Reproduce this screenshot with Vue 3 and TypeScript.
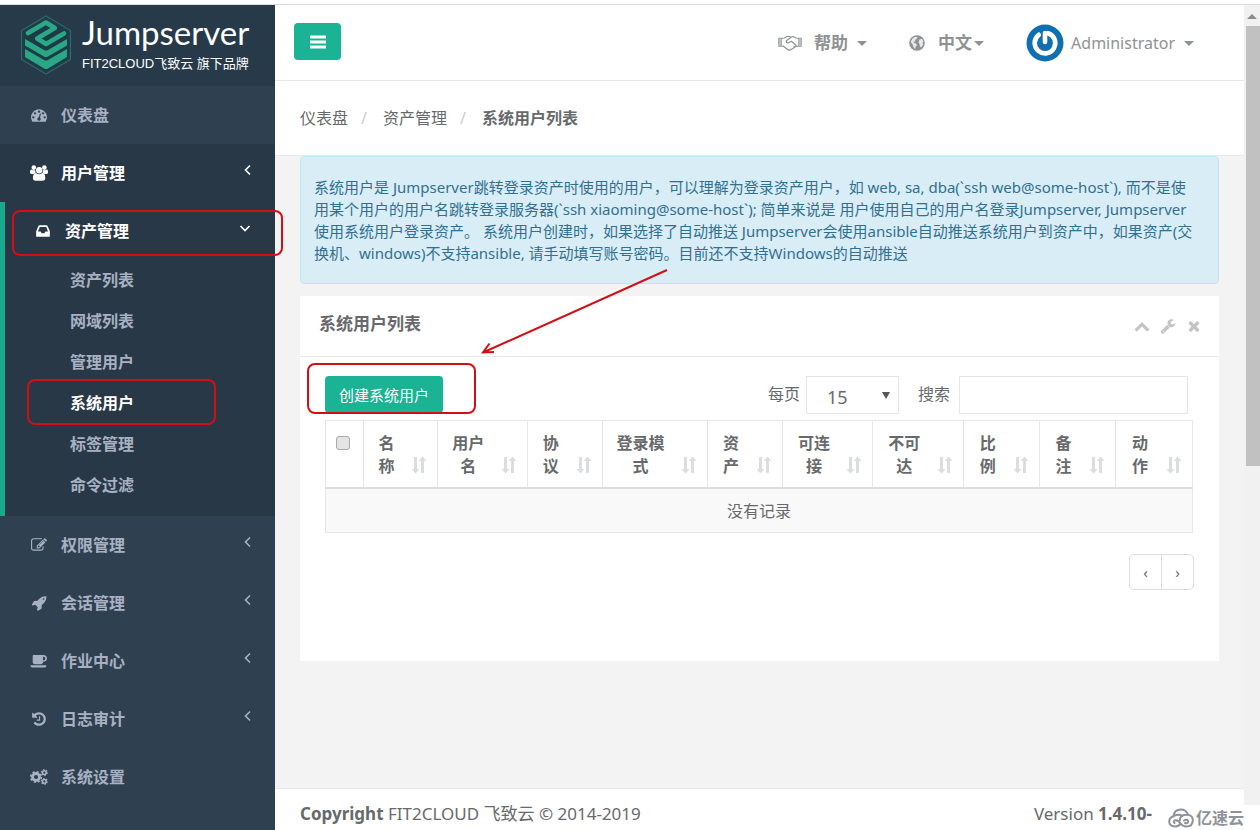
<script setup lang="ts">
import { ref } from 'vue'

interface Shape { box: string; d: string }
interface NavItem { label: string; icon: string; arrow?: boolean; lit?: boolean; children?: string[] }
interface Column { label: string; width: number }

const icons: Record<string, Shape> = {
  dashboard: { box: '0 0 1792 1792', d: 'M384 1152q0-53-37.5-90.5t-90.5-37.5-90.5 37.5-37.5 90.5 37.5 90.5 90.5 37.5 90.5-37.5 37.5-90.5zm192-448q0-53-37.5-90.5t-90.5-37.5-90.5 37.5-37.5 90.5 37.5 90.5 90.5 37.5 90.5-37.5 37.5-90.5zm428 481l101-382q6-26-7.5-48.5t-38.5-29.5-48 6.5-30 39.5l-101 382q-60 5-107 43.5t-63 98.5q-20 77 20 146t117 89 146-20 89-117q16-60-6-117t-72-91zm660-33q0-53-37.5-90.5t-90.5-37.5-90.5 37.5-37.5 90.5 37.5 90.5 90.5 37.5 90.5-37.5 37.5-90.5zm-640-640q0-53-37.5-90.5t-90.5-37.5-90.5 37.5-37.5 90.5 37.5 90.5 90.5 37.5 90.5-37.5 37.5-90.5zm448 192q0-53-37.5-90.5t-90.5-37.5-90.5 37.5-37.5 90.5 37.5 90.5 90.5 37.5 90.5-37.5 37.5-90.5zm320 448q0 261-141 483-19 29-54 29h-1402q-35 0-54-29-141-221-141-483 0-182 71-348t191-286 286-191 348-71 348 71 286 191 191 286 71 348z' },
  users: { box: '0 0 18 16', d: 'M6 5.200a3.200 3.200 0 1 1 6.400 0a3.200 3.200 0 1 1-6.400 0zM1.500 2.600a2.300 2.300 0 1 1 4.600 0a2.300 2.300 0 1 1-4.600 0zM12.100 2.600a2.300 2.300 0 1 1 4.600 0a2.300 2.300 0 1 1-4.600 0zM5.900 8C3.700 8.100 2.900 10.400 2.900 13C2.900 14.800 3.900 15.800 5.500 15.800H12.700C14.300 15.800 15.300 14.800 15.300 13C15.300 10.400 14.500 8.100 12.300 8C11.300 8.900 10.200 9.300 9.100 9.300C8 9.300 6.900 8.900 5.900 8zM1.400 4.600C.4 4.700 0 5.900 0 7.300C0 8.400 .6 8.900 1.500 8.900H4C4.600 8.100 5.200 7.700 5.800 7.500C5.300 6.900 5.200 6 5.200 5.100C3.900 5.600 2.400 5.400 1.400 4.600zM16.800 4.600C17.800 4.700 18 5.900 18 7.300C18 8.400 17.600 8.900 16.700 8.900H14.200C13.600 8.100 13 7.700 12.400 7.500C12.900 6.900 13 6 13 5.100C14.300 5.600 15.800 5.400 16.800 4.600z' },
  inbox: { box: '0 0 1792 1792', d: 'M1151 960h316q-1-3-2.500-8t-2.500-8l-212-496h-708l-212 496q-1 2-2.500 8t-2.500 8h316l95 192h320zm513 30v482q0 26-19 45t-45 19h-1408q-26 0-45-19t-19-45v-482q0-62 25-123l238-552q10-25 36.500-42t52.500-17h832q26 0 52.500 17t36.500 42l238 552q25 61 25 123z' },
  edit: { box: '0 0 1792 1792', d: 'M888 1184l116-116-152-152-116 116v56h96v96h56zm440-720q-16-16-33 1l-350 350q-17 17-1 33t33-1l350-350q17-17 1-33zm80 594v190q0 119-84.500 203.500t-203.500 84.500h-832q-119 0-203.500-84.500t-84.500-203.500v-832q0-119 84.500-203.500t203.500-84.500h832q63 0 117 25 15 7 18 23 3 17-9 29l-49 49q-14 14-32 8-23-6-45-6h-832q-66 0-113 47t-47 113v832q0 66 47 113t113 47h832q66 0 113-47t47-113v-126q0-13 9-22l64-64q15-15 35-7t20 29zm-96-738l288 288-672 672h-288v-288zm444 132l-92 92-288-288 92-92q28-28 68-28t68 28l152 152q28 28 28 68t-28 68z' },
  rocket: { box: '0 0 1792 1792', d: 'M1504 448q0-40-28-68t-68-28-68 28-28 68 28 68 68 28 68-28 28-68zm224-288q0 249-75.500 430.500t-253.500 360.500q-81 80-195 176l-20 379q-2 16-16 26l-384 224q-7 4-16 4-12 0-23-9l-64-64q-13-14-8-32l85-276-281-281-276 85q-3 1-9 1-14 0-23-9l-64-64q-17-19-5-39l224-384q10-14 26-16l379-20q96-114 176-195 188-187 358-258t431-71q14 0 24 9.500t10 22.500z' },
  coffee: { box: '0 0 1920 1792', d: 'M1664 608q0-80-56-136t-136-56h-64v384h64q80 0 136-56t56-136zm-1664 768h1792q0 106-75 181t-181 75h-1280q-106 0-181-75t-75-181zm1856-768q0 159-112.500 271.500t-271.500 112.500h-64v32q0 92-66 158t-158 66h-704q-92 0-158-66t-66-158v-736q0-26 19-45t45-19h1152q159 0 271.500 112.500t112.500 271.500z' },
  history: { box: '0 0 1792 1792', d: 'M1664 896q0 156-61 298t-164 245-245 164-298 61q-172 0-327-72.500t-264-204.500q-7-10-6.500-22.500t8.500-20.500l137-138q10-9 25-9 16 2 23 12 73 95 179 147t225 52q104 0 198.500-40.500t163.500-109.500 109.500-163.500 40.500-198.500-40.500-198.500-109.500-163.500-163.500-109.500-198.500-40.500q-98 0-188 35.500t-160 101.500l137 138q31 30 14 69-17 40-59 40h-448q-26 0-45-19t-19-45v-448q0-42 40-59 39-17 69 14l130 129q107-101 244.500-156.500t284.500-55.500q156 0 298 61t245 164 164 245 61 298zm-640-288v448q0 14-9 23t-23 9h-320q-14 0-23-9t-9-23v-64q0-14 9-23t23-9h224v-352q0-14 9-23t23-9h64q14 0 23 9t9 23z' },
  wrench: { box: '0 0 1792 1792', d: 'M448 1472q0-26-19-45t-45-19-45 19-19 45 19 45 45 19 45-19 19-45zm644-420l-682 682q-37 37-90 37-52 0-91-37l-106-108q-38-36-38-90 0-53 38-91l681-681q39 98 114.500 173.500t173.500 114.500zm634-435q0 39-23 106-47 134-164.500 217.500t-258.500 83.500q-185 0-316.500-131.500t-131.500-316.500 131.500-316.500 316.500-131.500q58 0 121.500 16.500t107.500 46.500q16 11 16 28t-16 28l-293 169v224l193 107q5-3 79-48.500t135.500-81 70.500-35.500q15 0 23.500 10t8.500 25z' },
  times: { box: '0 0 1792 1792', d: 'M1490 1322q0 40-28 68l-136 136q-28 28-68 28t-68-28l-294-294-294 294q-28 28-68 28t-68-28l-136-136q-28-28-28-68t28-68l294-294-294-294q-28-28-28-68t28-68l136-136q28-28 68-28t68 28l294 294 294-294q28-28 68-28t68 28l136 136q28 28 28 68t-28 68l-294 294 294 294q28 28 28 68z' },
  up: { box: '0 0 1792 1792', d: 'M1683 1331l-166 165q-19 19-45 19t-45-19l-531-531-531 531q-19 19-45 19t-45-19l-166-165q-19-19-19-45.500t19-45.500l742-741q19-19 45-19t45 19l742 741q19 19 19 45.500t-19 45.500z' },
}

const nav: NavItem[] = [
  { label: '仪表盘', icon: 'dashboard' },
  { label: '用户管理', icon: 'users', arrow: true, lit: true },
  { label: '资产管理', icon: 'inbox', arrow: true, lit: true, children: ['资产列表', '网域列表', '管理用户', '系统用户', '标签管理', '命令过滤'] },
  { label: '权限管理', icon: 'edit', arrow: true },
  { label: '会话管理', icon: 'rocket', arrow: true },
  { label: '作业中心', icon: 'coffee', arrow: true },
  { label: '日志审计', icon: 'history', arrow: true },
  { label: '系统设置', icon: 'cogs' },
]
const current = '系统用户'

const notice = [
  '系统用户是 Jumpserver跳转登录资产时使用的用户，可以理解为登录资产用户，如 web, sa, dba(`ssh web@some-host`), 而不是使',
  '用某个用户的用户名跳转登录服务器(`ssh xiaoming@some-host`); 简单来说是 用户使用自己的用户名登录Jumpserver, Jumpserver',
  '使用系统用户登录资产。 系统用户创建时，如果选择了自动推送 Jumpserver会使用ansible自动推送系统用户到资产中，如果资产(交',
  '换机、windows)不支持ansible, 请手动填写账号密码。目前还不支持Windows的自动推送',
]

const columns: Column[] = [
  { label: '名称', width: 74 },
  { label: '用户名', width: 90 },
  { label: '协议', width: 75 },
  { label: '登录模式', width: 105 },
  { label: '资产', width: 76 },
  { label: '可连接', width: 90 },
  { label: '不可达', width: 91 },
  { label: '比例', width: 76 },
  { label: '备注', width: 76 },
  { label: '动作', width: 77 },
]
const checkWidth = 38
const totalWidth = columns.reduce((sum, c) => sum + c.width, checkWidth)
const share = (w: number) => `${(w / totalWidth) * 100}%`

const pageSize = ref('15')
const query = ref('')
const checked = ref(false)
</script>

<template>
  <div class="page">
    <div class="strip"></div>
    <div class="shell">
      <aside class="sidebar">
        <a class="brand" href="#">
          <svg class="brand-mark" viewBox="0 0 52 60" aria-hidden="true">
            <path d="M26 1 50.500 15.500V44.500L26 59 1.500 44.500V15.500Z" fill="none" stroke="#2c6a6b" stroke-width="1.200" />
            <path d="M26 4 48 17V43L26 56 4 43V17Z" fill="#1d3b47" />
            <path d="M8 18 26 7.500 34.800 13 17.200 23.500 26 29 44 18.500" fill="none" stroke="#2aa886" stroke-width="4.600" stroke-linejoin="round" stroke-linecap="round" />
            <path d="M5 24 24 35Q26 36 28 35L47 24V30.500L28 41.500Q26 42.500 24 41.500L5 30.500Z" fill="#2aa886" />
            <path d="M5 34 24 45Q26 46 28 45L47 34V42L28 53.500Q26 54.700 24 53.500L5 42Z" fill="#2aa886" />
          </svg>
          <span class="brand-text">
            <span class="brand-name">Jumpserver</span>
            <span class="brand-sub">FIT2CLOUD飞致云 旗下品牌</span>
          </span>
        </a>
        <nav>
          <ul class="menu">
            <li v-for="item in nav" :key="item.label" :class="{ lit: item.lit, open: item.children }">
              <a class="menu-link" href="#">
                <svg v-if="item.icon === 'cogs'" class="menu-icon" viewBox="0 0 18 16" aria-hidden="true">
                  <g fill="none" stroke="currentColor">
                    <circle cx="6" cy="8" r="3.500" stroke-width="2.800" />
                    <circle cx="6" cy="8" r="5.200" stroke-width="1.800" stroke-dasharray="2 2.084" />
                    <circle cx="14.300" cy="3.600" r="1.900" stroke-width="1.600" />
                    <circle cx="14.300" cy="3.600" r="3" stroke-width="1.100" stroke-dasharray="1.400 1.742" />
                    <circle cx="14.300" cy="12.400" r="1.900" stroke-width="1.600" />
                    <circle cx="14.300" cy="12.400" r="3" stroke-width="1.100" stroke-dasharray="1.400 1.742" />
                  </g>
                </svg>
                <svg v-else class="menu-icon" :viewBox="icons[item.icon].box" aria-hidden="true"><path :d="icons[item.icon].d" fill="currentColor" /></svg>
                <span class="menu-label">{{ item.label }}</span>
                <svg v-if="item.arrow" class="menu-arrow" viewBox="0 0 12 12" aria-hidden="true">
                  <path :d="item.children ? 'M1.500 4 6 8.500 10.500 4' : 'M8 1.500 3.500 6 8 10.500'" fill="none" stroke="currentColor" stroke-width="1.600" />
                </svg>
              </a>
              <ul v-if="item.children" class="submenu">
                <li v-for="child in item.children" :key="child">
                  <a href="#" :class="{ current: child === current }">{{ child }}</a>
                </li>
              </ul>
            </li>
          </ul>
        </nav>
      </aside>

      <div class="main">
        <header class="topbar">
          <button class="toggle" type="button" aria-label="菜单">
            <svg viewBox="0 0 16 14" aria-hidden="true"><path d="M0 0.500H16V3.500H0ZM0 5.500H16V8.500H0ZM0 10.500H16V13.500H0Z" fill="#fff" /></svg>
          </button>
          <div class="tools">
            <a class="tool help" href="#">
              <svg class="hands" viewBox="0 0 24 16" fill="none" stroke="currentColor" stroke-width="1.200" stroke-linejoin="round" aria-hidden="true">
                <path d="M3.500 3.500 6.500 3 9 1.500H11.500L13 2.300 15 1.500 18 3 20.500 3.500M3.500 11 5.500 11.300 9.500 14.500Q11 15.500 13 14.600L18 11.500 20.500 11M13 2.300 8.700 5.500Q8 7.500 10 8L13.500 6.200 18.500 10.800M9.500 8Q7.800 7.500 8.300 5.800M15.500 11 17 12.300" />
                <path d="M.5 3H3.500V11.500H.5ZM20.500 3H23.500V11.500H20.500Z" fill="currentColor" fill-opacity=".6" stroke-width=".6" />
              </svg>
              <b>帮助</b><i class="caret"></i>
            </a>
            <a class="tool lang" href="#">
              <svg class="globe" viewBox="0 0 16 16" aria-hidden="true">
                <circle cx="8" cy="8" r="7.800" fill="currentColor" />
                <path d="M2.200 5.500 4.500 2.600 7 1.800 8.500 2.500 7.500 4 6 5 6.500 6.500 4.500 6.500 5 8 6.800 8.500 8 10 6.500 12 6 14.300 4.500 12 3.500 9 2 7.500ZM10.500 4.500 13 3.800 14.500 6.500 13.500 7.500 14.200 9.500 12.200 12.500 11 11.500 10.500 9 9.500 7.500Z" fill="#fff" fill-opacity=".8" />
              </svg>
              <b>中文</b><i class="caret"></i>
            </a>
            <a class="tool user" href="#">
              <svg class="avatar" viewBox="0 0 38 38" aria-hidden="true">
                <circle cx="19" cy="19" r="18.500" fill="#0f6fb0" />
                <path d="M12.800 10.800A10.300 10.300 0 1 0 22 9.200" fill="none" stroke="#fff" stroke-width="4.600" stroke-linecap="round" />
                <path d="M19 9V18" fill="none" stroke="#fff" stroke-width="4.600" stroke-linecap="round" />
              </svg>
              <span>Administrator</span><i class="caret"></i>
            </a>
          </div>
        </header>

        <ol class="crumbs">
          <li><a href="#">仪表盘</a></li>
          <li><a href="#">资产管理</a></li>
          <li><b>系统用户列表</b></li>
        </ol>

        <main class="content">
          <div class="notice"><span v-for="line in notice" :key="line">{{ line }}</span></div>

          <section class="panel">
            <div class="panel-head">
              <h5>系统用户列表</h5>
              <div class="panel-tools">
                <button v-for="name in ['up', 'wrench', 'times']" :key="name" type="button" :aria-label="name">
                  <svg :viewBox="icons[name].box" aria-hidden="true"><path :d="icons[name].d" fill="currentColor" /></svg>
                </button>
              </div>
            </div>
            <div class="panel-body">
              <div class="toolbar">
                <button class="create" type="button">创建系统用户</button>
                <div class="filters">
                  <label for="size">每页</label>
                  <div class="select">
                    <select id="size" v-model="pageSize"><option>15</option><option>25</option><option>50</option></select>
                    <i></i>
                  </div>
                  <label class="search-label" for="search">搜索</label>
                  <input id="search" v-model="query" class="search" type="text" />
                </div>
              </div>
              <table>
                <colgroup>
                  <col :style="{ width: share(checkWidth) }" />
                  <col v-for="c in columns" :key="c.label" :style="{ width: share(c.width) }" />
                </colgroup>
                <thead>
                  <tr>
                    <th class="check"><input v-model="checked" type="checkbox" aria-label="全选" /></th>
                    <th v-for="c in columns" :key="c.label">
                      {{ c.label }}
                      <svg class="sort" viewBox="0 0 16 18" aria-hidden="true"><path d="M3 1H6V13H8.500L4.500 17.500.5 13H3ZM10 17V5H7.800L11.500.5 15.500 5H13V17Z" fill="#dcdddf" /></svg>
                    </th>
                  </tr>
                </thead>
                <tbody>
                  <tr><td :colspan="columns.length + 1">没有记录</td></tr>
                </tbody>
              </table>
              <div class="pager">
                <button type="button">‹</button><button type="button">›</button>
              </div>
            </div>
          </section>
        </main>

        <footer class="footer">
          <div><b>Copyright</b> FIT2CLOUD 飞致云 © 2014-2019</div>
          <div class="version">Version <b>1.4.10-</b></div>
        </footer>
      </div>

      <div class="scroll">
        <div class="track"><i class="up"></i><div class="thumb"></div></div>
      </div>
    </div>

    <div class="watermark">
      <svg viewBox="0 0 26 20" fill="none" stroke="#8e9299" stroke-width="2" stroke-linecap="round" aria-hidden="true">
        <path d="M5.500 8.500Q6 1.500 13 1.500 18 1.500 20 6.500M12 12Q12 8 16 7 24.500 5.500 24.800 12 24.800 18.500 18.500 18.500 14.500 18.500 12.500 15.500 10 11.500 6.500 12.500 5 13.500 6.500 15M14.500 8Q10.500 5.500 6 8 1.200 9.500 1.200 13.500 1.500 18.500 7 18.500 11 18.500 12.500 15.500M16 12.500Q19.500 10.500 20.200 13.500 19.500 16 17 15" />
      </svg>
      <span>亿速云</span>
    </div>

    <svg class="marks" viewBox="0 0 1260 830" fill="none" stroke="#d30f16" stroke-width="2" aria-hidden="true">
      <rect x="13" y="211" width="269" height="44" rx="7" />
      <rect x="28" y="380" width="187" height="44" rx="7" />
      <rect x="308" y="364" width="167" height="49" rx="7" />
      <path d="M667 270 483 352.500M489.500 343.500 483 352.500 494 352" />
    </svg>
  </div>
</template>

<style>
body { background: #fff; }
</style>

<style scoped>
* { box-sizing: border-box; }
ul, ol { margin: 0; padding: 0; list-style: none; }
a { color: inherit; text-decoration: none; }
button, input, select { font-family: inherit; margin: 0; }
svg { display: block; flex: none; }

.page {
  position: relative;
  display: flex;
  flex-direction: column;
  min-height: 100vh;
  color: #676a6c;
  font: 16px/22px "Noto Sans", "Noto Sans CJK SC", sans-serif;
}
.strip { height: 5px; background: #fff; border-bottom: 1px solid #dcdcdc; }
.shell { display: flex; flex: 1; }

.sidebar { width: 275px; flex: none; background: #2f4050; color: #a7b1c2; font-weight: 700; }
.brand { display: flex; align-items: center; gap: 10px; height: 81px; padding: 0 0 2px 20px; background: #263a4a; color: #fff; font-weight: 400; }
.brand-mark { width: 52px; height: 60px; }
.brand-text { display: flex; flex-direction: column; padding-top: 4px; }
.brand-name { font: 400 33px/34px Lato, sans-serif; }
.brand-sub { font: 13px/30px "Liberation Sans", "Noto Sans CJK SC", sans-serif; }
.menu-link { display: flex; align-items: center; height: 58px; padding: 0 21px 0 30px; }
.menu-icon { width: 18px; height: 16px; }
.menu-label { flex: 1; margin-left: 13px; }
.menu-arrow { width: 12px; height: 12px; margin-bottom: 6px; }
.lit { background: #293846; }
.lit > .menu-link { color: #fff; }
.open { border-left: 5px solid #19aa8d; }
.open > .menu-link { padding-right: 24px; padding-left: 29px; }
.submenu { margin-top: -1px; padding-bottom: 11px; }
.submenu a { display: flex; align-items: center; height: 41px; padding-left: 65px; }
.submenu a.current { color: #fff; }

.main { display: flex; flex-direction: column; flex: 1; min-width: 0; background: #f3f3f4; }
.topbar { display: flex; align-items: center; justify-content: space-between; height: 76px; padding: 0 50px 2px 19px; background: #fff; border-bottom: 1px solid #e7eaec; }
.toggle { display: grid; place-items: center; width: 47px; height: 37px; padding: 0; border: 0; border-radius: 4px; background: #1ab394; }
.toggle svg { width: 16px; height: 14px; }
.tools { display: flex; align-items: center; padding-top: 3px; color: #8f9294; }
.tool { display: flex; align-items: center; }
.tool b { font-size: 17px; }
.help, .lang { margin-right: 42px; }
.hands { width: 24px; height: 16px; margin-right: 12px; }
.globe { width: 16px; height: 16px; margin-right: 13px; }
.avatar { width: 38px; height: 38px; margin-right: 7px; }
.caret { margin-left: 9px; border: 5px solid transparent; border-top-color: currentColor; border-bottom: 0; }
.lang .caret { margin-left: 2px; }

.crumbs { display: flex; align-items: center; height: 75px; padding-left: 25px; background: #fff; border-bottom: 1px solid #e7eaec; }
.crumbs li + li::before { content: "/"; padding: 0 16px 0 13px; color: #ccc; }

.content { flex: 1; padding: 0 25px; }
.notice { padding: 19px 13px; border: 1px solid #bce8f1; border-radius: 4px; background: #d9edf7; color: #31708f; font-size: 15px; }
.notice span { display: block; white-space: nowrap; }
.panel { margin-top: 12px; min-height: 365px; background: #fff; }
.panel-head { display: flex; align-items: center; justify-content: space-between; height: 61px; padding: 0 17px 4px 19px; border-bottom: 1px solid #e7eaec; }
.panel-head h5 { margin: 0; font-size: 17px; }
.panel-tools { display: flex; gap: 10px; padding-top: 4px; color: #c4c4c4; }
.panel-tools button { padding: 0; border: 0; background: none; color: inherit; }
.panel-tools svg { width: 16px; height: 16px; }
.panel-body { padding: 19px 26px 70px 25px; }
.toolbar { display: flex; justify-content: space-between; height: 44px; padding-right: 5px; }
.create { height: 37px; width: 118px; padding: 0; border: 0; border-radius: 4px; background: #1ab394; color: #fff; font-size: 15px; }
.filters { display: flex; align-items: center; height: 38px; }
.filters label { padding-bottom: 3px; }
.select { position: relative; margin-left: 6px; }
.select select { appearance: none; display: block; width: 93px; height: 38px; padding: 4px 0 0 20px; border: 1px solid #e5e6e7; border-radius: 0; background: #fff; color: inherit; font-size: 18px; }
.select i { position: absolute; right: 9px; top: 16px; border: 4px solid transparent; border-top: 7px solid #555; border-bottom: 0; }
.filters .search-label { margin: 0 9px 0 19px; }
.search { width: 229px; height: 38px; padding: 0 10px; border: 1px solid #e5e6e7; }

table { width: 100%; table-layout: fixed; border-collapse: collapse; }
th, td { border: 1px solid #e7e7e7; }
th { position: relative; height: 67px; padding: 11px 37px 9px 9px; border-bottom: 2px solid #ddd; line-height: 23px; text-align: center; vertical-align: top; }
.check { padding: 15px 2px 0 0; line-height: 0; }
.check input { appearance: none; width: 14px; height: 14px; border: 1px solid #aaa; border-radius: 3px; background: #e4e4e4; }
.sort { position: absolute; right: 10px; bottom: 13px; width: 16px; height: 18px; }
td { height: 44px; padding: 2px 0 0; background: #f9f9f9; text-align: center; }
.pager { display: flex; justify-content: flex-end; margin: 21px -1px 0 0; }
.pager button { width: 33px; height: 36px; padding: 0; border: 1px solid #ddd; background: #fff; color: #676a6c; font-size: 15px; }
.pager button:first-child { border-radius: 5px 0 0 5px; }
.pager button:last-child { margin-left: -1px; border-radius: 0 5px 5px 0; }

.footer { display: flex; align-items: center; justify-content: space-between; height: 42px; padding: 9px 92px 0 25px; background: #fff; border-top: 1px solid #e7eaec; font-size: 17px; }

.scroll { width: 16px; flex: none; padding-bottom: 25px; background: #fff; }
.track { display: flex; flex-direction: column; align-items: flex-end; height: 100%; background: #f1f1f1; }
.up { margin: 9px 3px 7px; border: 5px solid transparent; border-bottom-color: #8c8c8c; border-top: 0; }
.thumb { width: 14px; height: 55%; background: #c1c1c1; }

.watermark { position: absolute; right: 16px; bottom: 1px; display: flex; align-items: center; gap: 2px; color: #8e9299; font-weight: 700; }
.watermark svg { width: 26px; height: 20px; }
.marks { position: absolute; left: 0; top: 0; width: 1260px; height: 830px; pointer-events: none; }
</style>
